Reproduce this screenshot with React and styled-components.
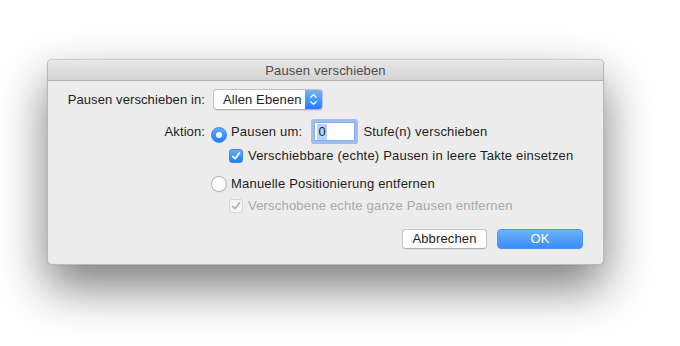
import React from "react";
import styled, { createGlobalStyle, css } from "styled-components";

const Global = createGlobalStyle`
  html, body { margin: 0; padding: 0; background: #ffffff; }
  body { font-family: "Liberation Sans", Arial, sans-serif; font-size: 13px; color: #1d1d1d; }
`;

const Stage = styled.div`
  width: 680px;
  height: 346px;
  padding: 59px 0 0 47px;
  box-sizing: border-box;
  overflow: hidden;
`;

const Window = styled.div`
  width: 557px;
  height: 206px;
  box-sizing: border-box;
  border: 1px solid #b9b9b9;
  border-top-color: #cfcfcf;
  border-radius: 5px;
  background: #ececec;
  box-shadow: 0 22px 48px rgba(0, 0, 0, 0.52), 0 0 1px rgba(0, 0, 0, 0.25);
  overflow: hidden;
  display: flex;
  flex-direction: column;
`;

const TitleBar = styled.div`
  height: 20px;
  flex: none;
  border-bottom: 1px solid #b4b4b4;
  background: linear-gradient(#e9e8e9, #d4d3d4);
  display: flex;
  align-items: center;
  justify-content: center;
  color: #4b4b4b;
  font-size: 13px;
  letter-spacing: 0.15px;
`;

const Content = styled.div`
  padding: 8px 19px 16px 19px;
  display: flex;
  flex-direction: column;
  letter-spacing: 0.2px;
`;

const Row = styled.div`
  display: grid;
  grid-template-columns: 138px auto;
  column-gap: 6px;
  align-items: center;
  height: ${(p) => p.$h}px;
  margin-top: ${(p) => p.$mt || 0}px;
`;

const Label = styled.div`
  text-align: right;
  white-space: nowrap;
  line-height: 16px;
  letter-spacing: 0.1px;
`;

const Cell = styled.div`
  display: flex;
  align-items: center;
  padding-left: ${(p) => p.$indent || 0}px;
  height: 100%;
`;

const Text = styled.span`
  white-space: nowrap;
  line-height: 16px;
  color: ${(p) => (p.$disabled ? "#a9a9a9" : "#1d1d1d")};
  margin-left: ${(p) => p.$ml || 0}px;
`;

const Popup = styled.div`
  margin-left: 2px;
  width: 110px;
  height: 21px;
  box-sizing: border-box;
  border: 1px solid #c4c4c4;
  border-bottom-color: #b0b0b0;
  border-radius: 4px;
  background: #ffffff;
  display: flex;
  align-items: center;
  overflow: hidden;
  box-shadow: 0 0.5px 1px rgba(0, 0, 0, 0.08);
`;

const PopupText = styled.span`
  flex: 1;
  padding-left: 9px;
  line-height: 16px;
  white-space: nowrap;
  letter-spacing: 0.1px;
`;

const Stepper = styled.div`
  width: 17px;
  height: 100%;
  flex: none;
  background: linear-gradient(#6fb5fb, #1f80fb);
  display: flex;
  align-items: center;
  justify-content: center;
`;

const Radio = styled.span`
  width: 16px;
  height: 16px;
  box-sizing: border-box;
  border-radius: 50%;
  flex: none;
  margin-top: ${(p) => p.$mt || 0}px;
  display: flex;
  align-items: center;
  justify-content: center;
  ${(p) =>
    p.$checked
      ? css`
          background: linear-gradient(#62abfb, #1d7ff9);
          border: 1px solid #3c86ef;
          &::after {
            content: "";
            width: 6px;
            height: 6px;
            border-radius: 50%;
            background: #fff;
          }
        `
      : css`
          background: #ffffff;
          border: 1px solid #b3b3b3;
          box-shadow: 0 0.5px 1px rgba(0, 0, 0, 0.1);
        `}
`;

const Check = styled.span`
  width: 14px;
  height: 14px;
  box-sizing: border-box;
  border-radius: 3px;
  flex: none;
  display: flex;
  align-items: center;
  justify-content: center;
  ${(p) =>
    p.$disabled
      ? css`
          background: #f6f6f6;
          border: 1px solid #d3d3d3;
        `
      : css`
          background: linear-gradient(#63acfb, #1f80f9);
          border: 1px solid #3b85ee;
        `}
`;

const Field = styled.div`
  margin-left: 12px;
  width: 41px;
  height: 19px;
  box-sizing: border-box;
  border: 1px solid #84aeec;
  border-radius: 1px;
  background: #ffffff;
  box-shadow: 0 0 0 3px rgba(110, 160, 238, 0.6);
  display: flex;
  align-items: center;
  padding-left: 2px;
`;

const Selected = styled.span`
  background: #b4d5fe;
  line-height: 16px;
  padding: 0 1px;
`;

const ButtonRow = styled.div`
  display: flex;
  justify-content: flex-end;
  gap: 10px;
  margin-top: 14px;
  height: 20px;
  padding-right: 1px;
`;

const Button = styled.button`
  font: inherit;
  letter-spacing: 0.15px;
  width: ${(p) => p.$w}px;
  height: 20px;
  box-sizing: border-box;
  border-radius: 4px;
  padding: 0;
  line-height: 16px;
  ${(p) =>
    p.$primary
      ? css`
          background: linear-gradient(#6cb3fb, #3a8cf8);
          border: 1px solid #4d93f2;
          color: #ffffff;
        `
      : css`
          background: #ffffff;
          border: 1px solid #c6c6c6;
          border-bottom-color: #b2b2b2;
          color: #1d1d1d;
          box-shadow: 0 0.5px 1px rgba(0, 0, 0, 0.08);
        `}
`;

const CheckMark = ({ color }) => (
  <svg width="10" height="10" viewBox="0 0 10 10">
    <path d="M1.6 5.3 L4 7.7 L8.4 2" fill="none" stroke={color} strokeWidth="1.7" strokeLinecap="round" strokeLinejoin="round" />
  </svg>
);

const Chevrons = () => (
  <svg width="9" height="13" viewBox="0 0 9 13">
    <path d="M1.8 4.3 L4.5 1.6 L7.2 4.3" fill="none" stroke="#fff" strokeWidth="1.3" strokeLinecap="round" strokeLinejoin="round" />
    <path d="M1.8 8.7 L4.5 11.4 L7.2 8.7" fill="none" stroke="#fff" strokeWidth="1.3" strokeLinecap="round" strokeLinejoin="round" />
  </svg>
);

export default function App() {
  return (
    <Stage>
      <Global />
      <Window>
        <TitleBar>Pausen verschieben</TitleBar>
        <Content>
          <Row $h={21}>
            <Label>Pausen verschieben in:</Label>
            <Cell>
              <Popup>
                <PopupText>Allen Ebenen</PopupText>
                <Stepper>
                  <Chevrons />
                </Stepper>
              </Popup>
            </Cell>
          </Row>
          <Row $h={25} $mt={9}>
            <Label>Aktion:</Label>
            <Cell>
              <Radio $checked $mt={6} />
              <Text $ml={4}>Pausen um:</Text>
              <Field>
                <Selected>0</Selected>
              </Field>
              <Text $ml={8}>Stufe(n) verschieben</Text>
            </Cell>
          </Row>
          <Row $h={18} $mt={3}>
            <div />
            <Cell $indent={18}>
              <Check>
                <CheckMark color="#ffffff" />
              </Check>
              <Text $ml={5}>Verschiebbare (echte) Pausen in leere Takte einsetzen</Text>
            </Cell>
          </Row>
          <Row $h={20} $mt={9}>
            <div />
            <Cell>
              <Radio />
              <Text $ml={4}>Manuelle Positionierung entfernen</Text>
            </Cell>
          </Row>
          <Row $h={18} $mt={3}>
            <div />
            <Cell $indent={18}>
              <Check $disabled>
                <CheckMark color="#b4b4b4" />
              </Check>
              <Text $ml={5} $disabled>
                Verschobene echte ganze Pausen entfernen
              </Text>
            </Cell>
          </Row>
          <ButtonRow>
            <Button $w={85}>Abbrechen</Button>
            <Button $w={86} $primary>
              OK
            </Button>
          </ButtonRow>
        </Content>
      </Window>
    </Stage>
  );
}
